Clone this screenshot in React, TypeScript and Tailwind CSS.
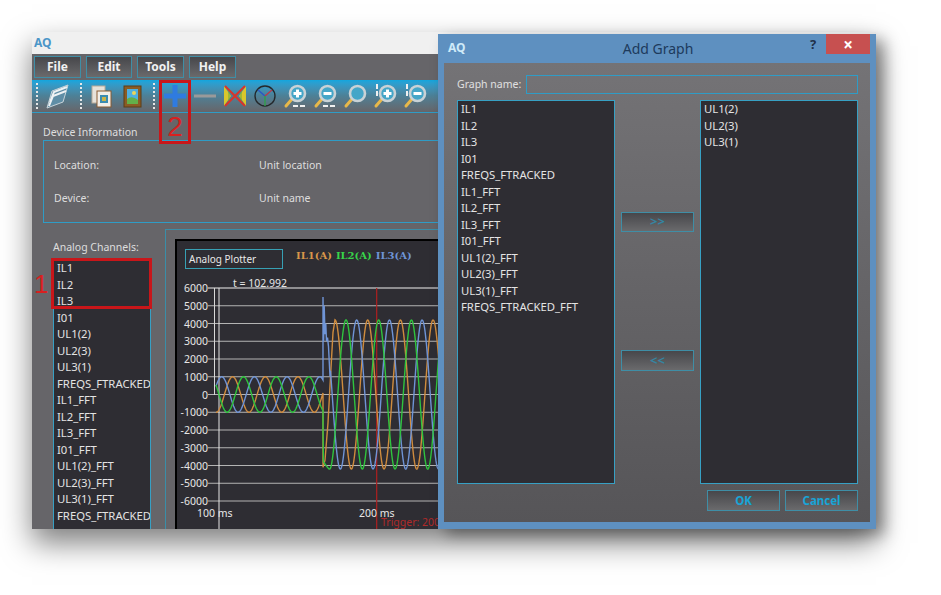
const uiFont = { fontFamily: '"Noto Sans", "Liberation Sans", sans-serif' };

const channels = [
  "IL1", "IL2", "IL3", "I01", "UL1(2)", "UL2(3)", "UL3(1)", "FREQS_FTRACKED",
  "IL1_FFT", "IL2_FFT", "IL3_FFT", "I01_FFT", "UL1(2)_FFT", "UL2(3)_FFT", "UL3(1)_FFT", "FREQS_FTRACKED",
];
const available = [
  "IL1", "IL2", "IL3", "I01", "FREQS_FTRACKED", "IL1_FFT", "IL2_FFT", "IL3_FFT", "I01_FFT",
  "UL1(2)_FFT", "UL2(3)_FFT", "UL3(1)_FFT", "FREQS_FTRACKED_FFT",
];
const selected = ["UL1(2)", "UL2(3)", "UL3(1)"];
const ticks = [6000, 5000, 4000, 3000, 2000, 1000, 0, -1000, -2000, -3000, -4000, -5000, -6000];

const PERIOD = 32.7;
const yOf = (v: number) => 394.5 - v * 0.01775;
const wave = (x: number, peak: number, amp: number) => amp * Math.cos((2 * Math.PI * (x - peak)) / PERIOD);

function buildPath(lowPeak: number, highPeak: number, start: [number, number][]) {
  const pts: string[] = [];
  for (let x = 216; x <= 323; x += 0.5) pts.push(`${x},${yOf(wave(x, lowPeak, 1000)).toFixed(1)}`);
  for (const [x, v] of start) pts.push(`${x},${yOf(v).toFixed(1)}`);
  for (let x = start[start.length - 1][0] + 0.5; x <= 441; x += 0.5) pts.push(`${x},${yOf(wave(x, highPeak, 4200)).toFixed(1)}`);
  return "M" + pts.join("L");
}

const orangeStart: [number, number][] = [[323, -4100], [325, -3700], [328, -1600], [331, 1500], [333, 3500], [335, 4200]];
const greenStart: [number, number][] = [[323, -2000], [323.5, -3800], [326, -4000], [329, -4200]];
const blueStart: [number, number][] = [[323, 1000], [323, 5500], [323.6, 3000], [324.2, 5000], [325, 3400], [325.8, 4000], [326.5, 3000], [327.5, 3200], [328.5, 2700], [330, 1000]];

function Btn({ children, className }: { children: React.ReactNode; className: string }) {
  return (
    <div className={`flex items-center justify-center border border-[#3f8ea6] bg-gradient-to-b from-[#47474b] to-[#6a6a6c] ${className}`}>
      {children}
    </div>
  );
}

function Listing({ items, className }: { items: string[]; className: string }) {
  return (
    <div className={`overflow-hidden border border-[#37a0c4] bg-[#2e2d33] pl-[3px] text-[11.3px] leading-[16.53px] text-[#e4e4e4] ${className}`}>
      {items.map((item, i) => (
        <div key={i} className="whitespace-nowrap">{item}</div>
      ))}
    </div>
  );
}

function Sep() {
  return <div className="h-[26px] w-[2px] border-l-2 border-dotted border-[#e6e6e6]" />;
}

function Lens({ mark, arrows }: { mark?: "plus" | "minus"; arrows?: "h" | "v" }) {
  return (
    <svg width="28" height="28" viewBox="0 0 28 28">
      <path d="M10 17 L4 24" stroke="#e8b84a" strokeWidth="3" strokeLinecap="round" />
      <circle cx="15.5" cy="11.5" r="7.5" fill="#45a6c8" stroke="#c9d2d6" strokeWidth="2.6" />
      {mark && <path d="M11.5 11.5h8" stroke="#fff" strokeWidth="3" />}
      {mark === "plus" && <path d="M15.5 7.5v8" stroke="#fff" strokeWidth="3" />}
      {arrows === "h" && <path d="M11 24h13" stroke="#f0f0f0" strokeWidth="2" strokeDasharray="5 2" />}
      {arrows === "v" && <path d="M5 2v13" stroke="#f0f0f0" strokeWidth="2" strokeDasharray="5 2" />}
    </svg>
  );
}

function Toolbar() {
  return (
    <div className="flex h-[33px] items-center border-b border-[#2f9cc6] bg-gradient-to-b from-[#12a6de] via-[#4d8096] to-[#666569] pl-[4px]">
      <Sep />
      <svg className="ml-[5px]" width="28" height="28" viewBox="0 0 28 28">
        <path d="M4 26 L9 9 L25 3 L20 20 Z" fill="#5f8ea6" stroke="#c8d4da" strokeWidth="1" />
        <path d="M7 20 L11 10 L24 5 M6 24 L10 14 L23 9" stroke="#eef2f4" strokeWidth="2" fill="none" />
      </svg>
      <div className="ml-[9px]"><Sep /></div>
      <svg className="ml-[5px]" width="28" height="28" viewBox="0 0 28 28">
        <rect x="5" y="4" width="13" height="17" fill="#e6e2da" stroke="#b8aa98" />
        <rect x="10" y="9" width="14" height="16" fill="#f1eee8" stroke="#8a5a30" />
        <rect x="13" y="13" width="8" height="8" fill="#3a8cb0" />
        <rect x="15" y="15" width="4" height="4" fill="#c9b44a" />
      </svg>
      <svg className="ml-[3px]" width="28" height="28" viewBox="0 0 28 28">
        <rect x="6" y="4" width="17" height="21" fill="#8a5c24" stroke="#5d3d16" />
        <rect x="9" y="7" width="11" height="15" fill="#4fb0e0" />
        <path d="M9 22 L9 17 Q14 13 20 18 L20 22 Z" fill="#63b04a" />
        <circle cx="16" cy="11" r="2" fill="#ecd65a" />
      </svg>
      <div className="ml-[7px]"><Sep /></div>
      <div className="ml-[6px] flex items-center gap-[2px]">
        <svg width="28" height="28" viewBox="0 0 28 28">
          <path d="M14 3v22M3 14h22" stroke="#2f7be0" strokeWidth="5" />
        </svg>
        <svg width="28" height="28" viewBox="0 0 28 28">
          <path d="M3 14h22" stroke="#9a9a9a" strokeWidth="3" />
        </svg>
        <svg width="28" height="28" viewBox="0 0 28 28">
          <path d="M3 4 L10 14 L3 24 Z" fill="#d8c62c" />
          <path d="M25 4 L18 14 L25 24 Z" fill="#d8c62c" />
          <path d="M8 7 L8 21 M20 7 L20 21" stroke="#6aa83c" strokeWidth="1" />
          <path d="M4 4 L24 24 M24 4 L4 24" stroke="#d9342c" strokeWidth="2" />
        </svg>
        <svg width="28" height="28" viewBox="0 0 28 28">
          <circle cx="14" cy="14" r="10" fill="none" stroke="#24282b" strokeWidth="1.4" />
          <path d="M14 14 L7 8" stroke="#2a55c8" strokeWidth="1.4" />
          <path d="M14 14 L21 8" stroke="#b83a4a" strokeWidth="1.4" />
          <path d="M14 14 V24" stroke="#2fa04a" strokeWidth="1.4" />
        </svg>
        <div className="ml-[1px] flex items-center gap-[2px]">
          <Lens mark="plus" arrows="h" />
          <Lens mark="minus" arrows="h" />
          <Lens />
          <Lens mark="plus" arrows="v" />
          <Lens mark="minus" arrows="v" />
        </div>
      </div>
    </div>
  );
}

function Chart() {
  return (
    <svg className="block" width="262" height="252" viewBox="177 277 262 252" style={uiFont}>
      <text x="233" y="287" fontSize="10.5" fill="#e6e6e6">t = 102.992</text>
      {ticks.map((t) => (
        <g key={t}>
          <line x1="208" x2="439" y1={yOf(t)} y2={yOf(t)} stroke={t === 6000 ? "#f0f0f0" : "#b4b4b4"} strokeWidth="1" />
          <text x="208" y={yOf(t) + 4} textAnchor="end" fontSize="10.5" fill="#e6e6e6">{t}</text>
        </g>
      ))}
      <line x1="214.5" x2="214.5" y1="288" y2="395" stroke="#d8d8d8" />
      <line x1="219" x2="219" y1="288" y2="529" stroke="#e6e6e6" />
      <line x1="376.7" x2="376.7" y1="288" y2="529" stroke="#b02020" strokeWidth="1.2" />
      <path d={buildPath(232.6, 335, orangeStart)} fill="none" stroke="#cf8c3e" strokeWidth="1.4" />
      <path d={buildPath(221.7, 356.7, blueStart)} fill="none" stroke="#6f94d6" strokeWidth="1.4" />
      <path d={buildPath(243.5, 346, greenStart)} fill="none" stroke="#2fc43e" strokeWidth="1.4" />
      <text x="197" y="517" fontSize="10.5" fill="#e6e6e6">100 ms</text>
      <text x="359" y="517" fontSize="10.5" fill="#e6e6e6">200 ms</text>
      <text x="381" y="526" fontSize="10.5" fill="#b02a2a">Trigger: 200</text>
    </svg>
  );
}

function MainWindow() {
  return (
    <div className="h-[497px] w-[844px] overflow-hidden bg-[#666569] text-[#dedede] shadow-[0_14px_28px_rgba(0,0,0,0.5)]" style={uiFont}>
      <div className="flex h-[22px] items-center bg-[#f0f0f0] pl-[2px]">
        <span className="text-[12px] font-bold leading-none text-[#4c96c8]">AQ</span>
      </div>
      <div className="flex h-[26px] items-center gap-[5px] pl-[2px] text-[12px] font-bold text-[#f2f2f2]">
        <Btn className="h-[22px] w-[47px] from-[#3e3e42]">File</Btn>
        <Btn className="h-[22px] w-[46px] from-[#3e3e42]">Edit</Btn>
        <Btn className="h-[22px] w-[47px] from-[#3e3e42]">Tools</Btn>
        <Btn className="h-[22px] w-[47px] from-[#3e3e42]">Help</Btn>
      </div>
      <Toolbar />
      <div className="flex h-[27px] items-end pl-[11px] text-[10.5px] leading-[16px]">Device Information</div>
      <div className="ml-[11px] grid h-[83px] grid-cols-[205px_1fr] content-center gap-y-[17px] border border-[#2f9cc6] pl-[10px] text-[10.5px] leading-[16px]">
        <div>Location:</div>
        <div>Unit location</div>
        <div>Device:</div>
        <div>Unit name</div>
      </div>
      <div className="flex">
        <div className="w-[133px] pl-[21px] pt-[16px]">
          <div className="h-[19px] text-[10.5px] leading-[16px]">Analog Channels:</div>
          <Listing items={channels} className="h-[272px] w-[98px] border-t-0 border-b-0 pt-[2px]" />
        </div>
        <div className="mt-[6px] h-[300px] flex-1 border-l border-t border-[#3a8ea8] pl-[9px] pt-[9px]">
          <div className="h-[292px] w-[400px] border-l-2 border-t-2 border-black bg-[#2e2d33]">
            <div className="flex h-[36px] items-start pl-[8px] pt-[8px]">
              <div className="flex h-[20px] w-[98px] items-center border border-[#37a0b4] pl-[3px] text-[10px] text-[#e8e8e8]">Analog Plotter</div>
              <div className="ml-[13px] flex gap-[4px] text-[10px] font-bold leading-[14px]" style={{ fontFamily: '"DejaVu Serif", "Liberation Serif", serif' }}>
                <span className="text-[#d8964a]">IL1(A)</span>
                <span className="text-[#38d44a]">IL2(A)</span>
                <span className="text-[#6f94d6]">IL3(A)</span>
              </div>
            </div>
            <Chart />
          </div>
        </div>
      </div>
    </div>
  );
}

function AddGraphDialog() {
  return (
    <div className="absolute left-[438px] top-[34px] flex h-[495px] w-[438px] flex-col bg-[#5e90c0] shadow-[8px_6px_14px_rgba(0,0,0,0.35)]" style={uiFont}>
      <div className="relative flex h-[29px] items-center justify-center pl-[2px] text-[14px] text-[#1d3a5c]">
        <span className="absolute left-[10px] top-[5px] text-[12px] font-bold text-[#cfeaf8]">AQ</span>
        <span>Add Graph</span>
        <span className="absolute left-[372px] top-[1px] text-[13px] font-bold text-[#20304a]">?</span>
        <div className="absolute right-[6px] top-0 flex h-[20px] w-[44px] items-center justify-center bg-[#c75050] text-[17px] font-bold leading-none text-white">×</div>
      </div>
      <div className="mx-[6px] flex h-[459px] flex-col bg-gradient-to-b from-[#747376] to-[#565558] pl-[13px] pr-[12px] pt-[12px] text-[#e0e0e0]">
        <div className="flex h-[19px] items-center">
          <div className="w-[69px] text-[10.5px]">Graph name:</div>
          <div className="h-full flex-1 border border-[#2f9cc6]" />
        </div>
        <div className="mt-[6px] flex h-[384px]">
          <Listing items={available} className="h-full w-[158px]" />
          <div className="w-[85px] px-[6px] pt-[112px] text-[13px] font-bold text-[#3585a2]">
            <Btn className="h-[20px] w-[73px]">&gt;&gt;</Btn>
            <Btn className="mt-[118px] h-[21px] w-[73px]">&lt;&lt;</Btn>
          </div>
          <Listing items={selected} className="h-full w-[158px]" />
        </div>
        <div className="mt-[6px] flex h-[21px] justify-end gap-[5px] text-[11.5px] font-bold text-[#18a4d6]">
          <Btn className="h-full w-[73px]">OK</Btn>
          <Btn className="h-full w-[73px]">Cancel</Btn>
        </div>
      </div>
    </div>
  );
}

export default function App() {
  return (
    <div className="relative h-[595px] w-[941px] overflow-hidden bg-white pl-[32px] pt-[32px]">
      <MainWindow />
      <AddGraphDialog />
      <div className="absolute left-[159px] top-[80px] flex h-[64px] w-[32px] items-end justify-center border-[3px] border-[#c8161a] text-[28px] leading-[28px] text-[#d8201f]" style={{ fontFamily: '"Liberation Sans", sans-serif' }}>2</div>
      <div className="absolute left-[51px] top-[258px] h-[51px] w-[101px] border-[3px] border-[#c8161a]" />
      <div className="absolute left-[34px] top-[269px] text-[26px] leading-[30px] text-[#d8201f]" style={{ fontFamily: '"Liberation Sans", sans-serif' }}>1</div>
    </div>
  );
}
